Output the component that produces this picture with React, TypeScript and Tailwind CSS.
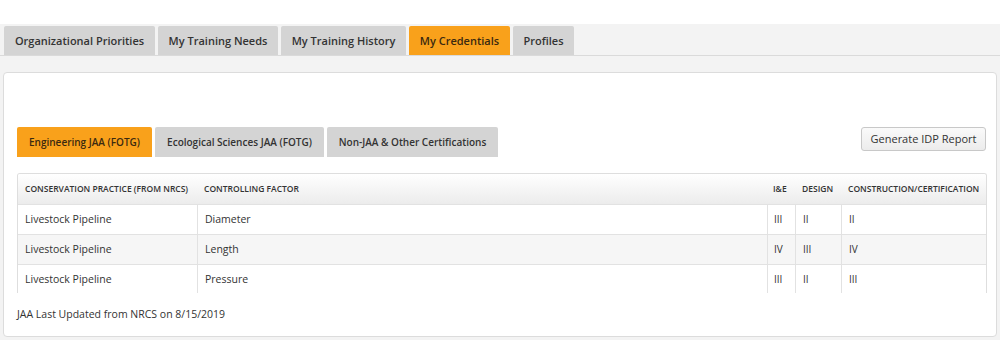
import React from "react";

const mainTabs = [
  { label: "Organizational Priorities", w: "w-[151px]" },
  { label: "My Training Needs", w: "w-[120px]" },
  { label: "My Training History", w: "w-[125px]" },
  { label: "My Credentials", w: "w-[101px]", active: true },
  { label: "Profiles", w: "w-[61px]" },
];

const subTabs = [
  { label: "Engineering JAA (FOTG)", w: "w-[135px]", active: true },
  { label: "Ecological Sciences JAA (FOTG)", w: "w-[169px]" },
  { label: "Non-JAA & Other Certifications", w: "w-[171px]" },
];

const rows = [
  ["Livestock Pipeline", "Diameter", "III", "II", "II"],
  ["Livestock Pipeline", "Length", "IV", "III", "IV"],
  ["Livestock Pipeline", "Pressure", "III", "II", "III"],
];

export default function App() {
  return (
    <div className="h-[361px] w-[1000px] bg-white pt-[24px] font-['Open_Sans',sans-serif] text-[#333]">
      <div className="bg-[#f3f3f3] pb-[3px]">
        <div className="flex gap-[3px] border-b border-[#dadada] px-[4px] pt-[2px]">
          {mainTabs.map((t) => (
            <div
              key={t.label}
              className={`${t.w} flex h-[29px] items-center justify-center rounded-t-[2px] pt-[1px] text-[11px] font-semibold ${
                t.active ? "bg-[#f9a11b] text-[#3b2a10]" : "bg-[#d4d4d4] text-[#333]"
              }`}
            >
              {t.label}
            </div>
          ))}
        </div>
        <div className="px-[3px] pt-[16px]">
          <div className="h-[265px] rounded-[4px] border border-[#dcdcdc] bg-white pl-[13px] pr-[9px] pt-[54px]">
            <div className="flex items-start justify-between">
              <div className="flex gap-[3px]">
                {subTabs.map((t) => (
                  <div
                    key={t.label}
                    className={`${t.w} flex h-[30px] items-center justify-center rounded-t-[2px] text-[10px] font-semibold ${
                      t.active ? "bg-[#f9a11b] text-[#3b2a10]" : "bg-[#d4d4d4] text-[#333]"
                    }`}
                  >
                    {t.label}
                  </div>
                ))}
              </div>
              <button className="mr-[1px] h-[24px] w-[125px] rounded-[3px] border border-[#c8c8c8] bg-gradient-to-b from-[#fafafa] to-[#ececec] text-[11px] text-[#333]">
                Generate IDP Report
              </button>
            </div>
            <div className="mt-[16px] h-[120px] overflow-hidden rounded-t-[3px] border-x border-t border-[#dedede]">
              <div className="flex h-[30px] items-center bg-gradient-to-b from-white to-[#ececec] text-[8.5px] font-semibold uppercase text-[#333]">
                <div className="w-[179px] pl-[7px]">Conservation Practice (from NRCS)</div>
                <div className="w-[570px] pl-[7px]">Controlling Factor</div>
                <div className="w-[28px] pl-[6px]">I&amp;E</div>
                <div className="w-[46px] pl-[7px]">Design</div>
                <div className="flex-1 pl-[7px]">Construction/Certification</div>
              </div>
              {rows.map((r, i) => (
                <div
                  key={i}
                  className={`flex h-[30px] border-t border-[#e2e2e2] text-[10.5px] text-[#333] ${
                    i % 2 === 1 ? "bg-[#f6f6f6]" : "bg-white"
                  }`}
                >
                  <div className="flex w-[179px] items-center pl-[7px]">{r[0]}</div>
                  <div className="flex w-[570px] items-center border-l border-[#e2e2e2] pl-[7px]">{r[1]}</div>
                  <div className="flex w-[28px] items-center border-l border-[#e2e2e2] pl-[6px] text-[10px]">{r[2]}</div>
                  <div className="flex w-[46px] items-center border-l border-[#e2e2e2] pl-[7px] text-[10px]">{r[3]}</div>
                  <div className="flex flex-1 items-center border-l border-[#e2e2e2] pl-[7px] text-[10px]">{r[4]}</div>
                </div>
              ))}
            </div>
            <div className="mt-[14px] text-[10.5px] font-medium text-[#333]">
              JAA Last Updated from NRCS on 8/15/2019
            </div>
          </div>
        </div>
      </div>
    </div>
  );
}
